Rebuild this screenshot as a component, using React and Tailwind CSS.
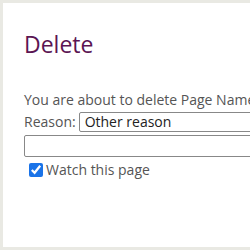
export default function App() {
  return (
    <div className="w-[250px] h-[250px] overflow-hidden bg-[#e9e9e3] pl-[3px] pt-[3px] pb-[3px]">
      <div
        className="h-full w-[400px] bg-white pl-[21px] pt-[26px] text-[#555]"
        style={{ fontFamily: "'Open Sans', 'Noto Sans', sans-serif" }}
      >
        <h1 className="text-[23px] leading-[30px] text-[#5b1553]">Delete</h1>
        <p className="mt-[31px] text-[14px] leading-[19px] whitespace-nowrap">
          You are about to delete Page Name
        </p>
        <div className="mt-[2px] flex items-center gap-[3px] text-[14px]">
          <span>Reason:</span>
          <div className="h-[20px] w-[300px] border border-[#888] rounded-[2px] px-[5px] leading-[18px] text-[#222]">
            Other reason
          </div>
        </div>
        <div className="mt-[3px] h-[22px] w-[300px] border border-[#888] rounded-[2px]" />
        <label className="mt-[5px] ml-[5px] flex items-center gap-[3px] text-[14px] leading-[16px]">
          <input type="checkbox" defaultChecked className="w-[14px] h-[14px] m-0 accent-[#1a73e8]" />
          <span>Watch this page</span>
        </label>
      </div>
    </div>
  );
}
